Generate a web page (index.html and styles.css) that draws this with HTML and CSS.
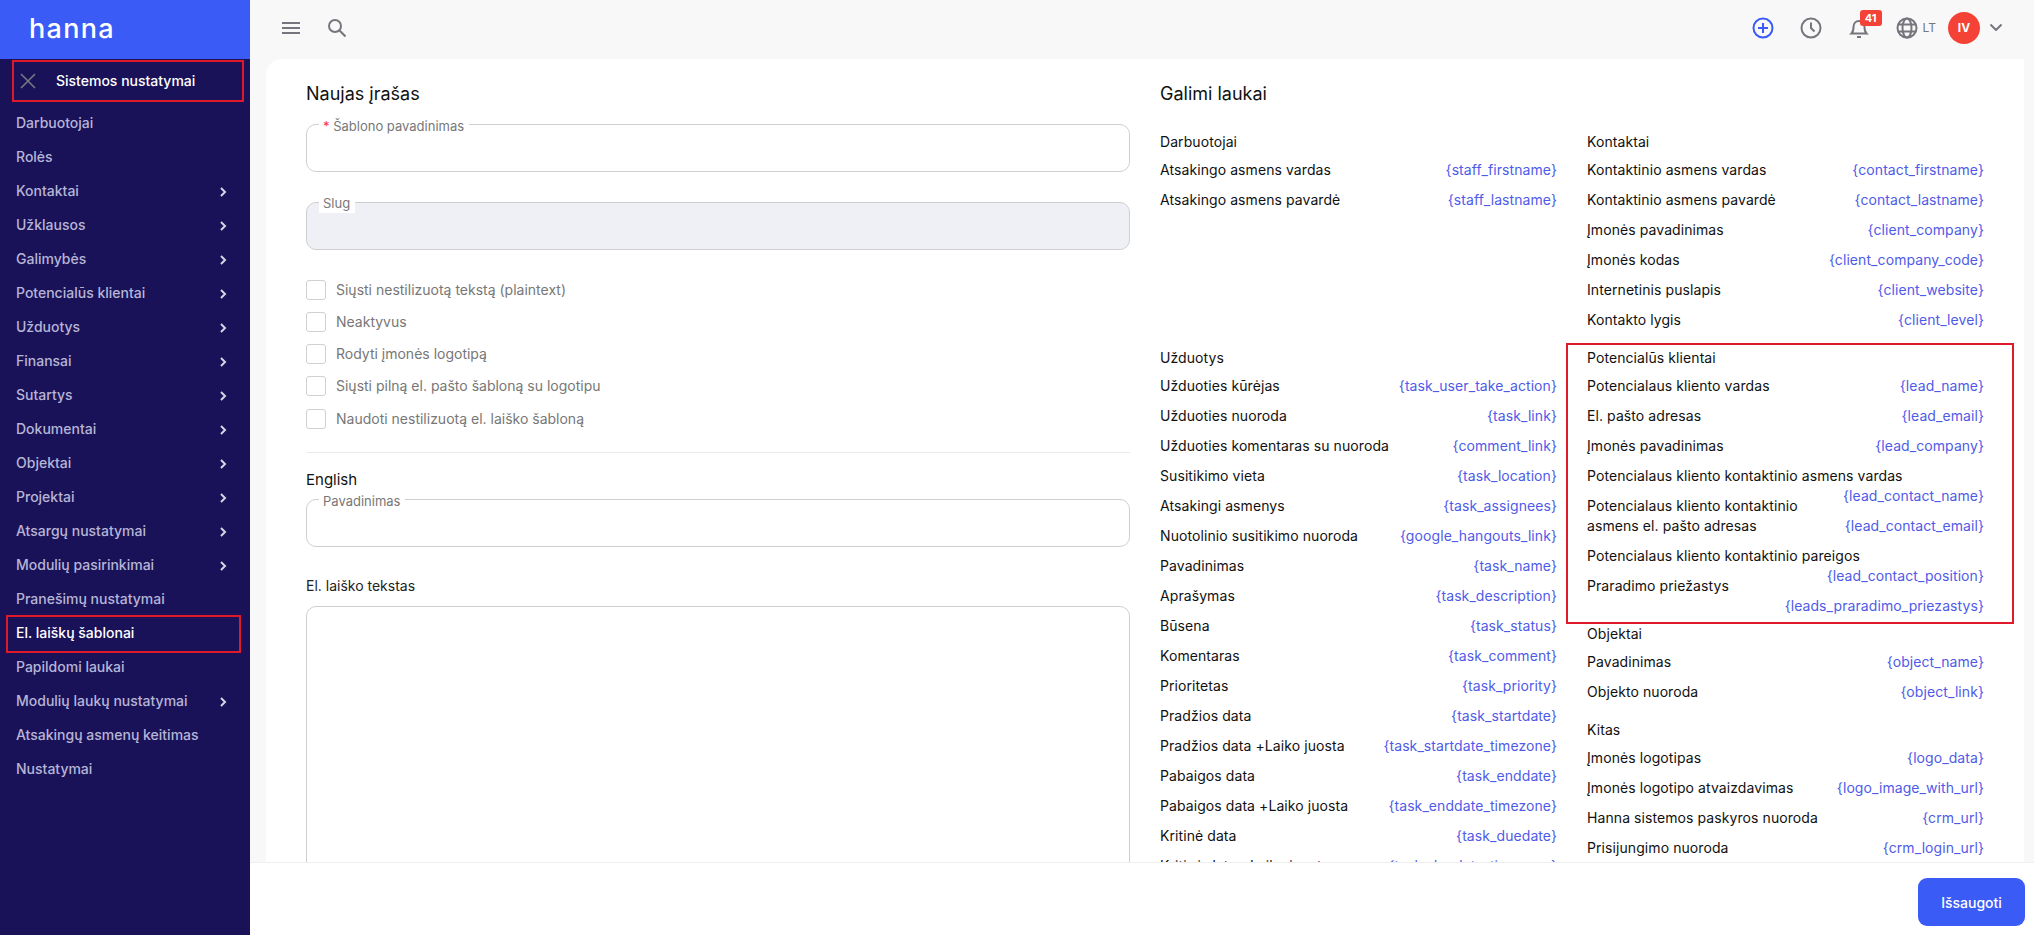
FILE: index.html
```html
<!DOCTYPE html>
<html lang="lt">
<head>
<meta charset="utf-8">
<title>Hanna</title>
<link rel="stylesheet" href="styles.css">
</head>
<body>
<div class="app">
  <aside class="sidebar">
    <div class="brand"><span class="logo">hanna</span></div>
    <div class="side-head marked">
      <svg class="side-x" width="16" height="16" viewBox="0 0 16 16"><path d="M1 1l14 14M15 1L1 15"/></svg>
      <span>Sistemos nustatymai</span>
    </div>
    <nav class="nav">
      <a class="nav-item">Darbuotojai</a>
      <a class="nav-item">Rolės</a>
      <a class="nav-item more">Kontaktai<svg viewBox="0 0 8 12"><path d="M2 2l4 4-4 4"/></svg></a>
      <a class="nav-item more">Užklausos<svg viewBox="0 0 8 12"><path d="M2 2l4 4-4 4"/></svg></a>
      <a class="nav-item more">Galimybės<svg viewBox="0 0 8 12"><path d="M2 2l4 4-4 4"/></svg></a>
      <a class="nav-item more">Potencialūs klientai<svg viewBox="0 0 8 12"><path d="M2 2l4 4-4 4"/></svg></a>
      <a class="nav-item more">Užduotys<svg viewBox="0 0 8 12"><path d="M2 2l4 4-4 4"/></svg></a>
      <a class="nav-item more">Finansai<svg viewBox="0 0 8 12"><path d="M2 2l4 4-4 4"/></svg></a>
      <a class="nav-item more">Sutartys<svg viewBox="0 0 8 12"><path d="M2 2l4 4-4 4"/></svg></a>
      <a class="nav-item more">Dokumentai<svg viewBox="0 0 8 12"><path d="M2 2l4 4-4 4"/></svg></a>
      <a class="nav-item more">Objektai<svg viewBox="0 0 8 12"><path d="M2 2l4 4-4 4"/></svg></a>
      <a class="nav-item more">Projektai<svg viewBox="0 0 8 12"><path d="M2 2l4 4-4 4"/></svg></a>
      <a class="nav-item more">Atsargų nustatymai<svg viewBox="0 0 8 12"><path d="M2 2l4 4-4 4"/></svg></a>
      <a class="nav-item more">Modulių pasirinkimai<svg viewBox="0 0 8 12"><path d="M2 2l4 4-4 4"/></svg></a>
      <a class="nav-item">Pranešimų nustatymai</a>
      <a class="nav-item active">El. laiškų šablonai</a>
      <a class="nav-item">Papildomi laukai</a>
      <a class="nav-item more">Modulių laukų nustatymai<svg viewBox="0 0 8 12"><path d="M2 2l4 4-4 4"/></svg></a>
      <a class="nav-item">Atsakingų asmenų keitimas</a>
      <a class="nav-item">Nustatymai</a>
    </nav>
  </aside>
  <main class="main">
    <header class="topbar">
      <svg class="tool" width="18" height="14" viewBox="0 0 18 14"><path d="M0 2h18M0 7h18M0 12h18"/></svg>
      <svg class="tool" width="18" height="18" viewBox="0 0 18 18"><circle cx="7" cy="7" r="6"/><path d="M11.5 11.5L17.5 17.5"/></svg>
      <div class="top-right">
        <svg class="tool plus" width="22" height="22" viewBox="0 0 22 22"><circle cx="11" cy="11" r="9.5"/><path d="M11 6v10M6 11h10"/></svg>
        <svg class="tool" width="22" height="22" viewBox="0 0 22 22"><circle cx="11" cy="11" r="9.5"/><path d="M11 5.5V11l3.5 3.5"/></svg>
        <div class="bell">
          <svg class="tool" width="22" height="24" viewBox="0 0 22 24"><path d="M3.5 17.5c1.5-1.500 2-3 2-6.500 0-3.500 2.300-6 5.500-6s5.500 2.500 5.500 6c0 3.500 .5 5 2 6.500zM9 21h4"/></svg>
          <span class="badge">41</span>
        </div>
        <div class="lang">
          <svg class="tool" width="22" height="22" viewBox="0 0 22 22"><circle cx="11" cy="11" r="9.500"/><ellipse cx="11" cy="11" rx="4.500" ry="9.500"/><path d="M2.500 7.500h17M2.500 14.500h17"/></svg>
          <span>LT</span>
        </div>
        <div class="user">
          <span class="avatar">IV</span>
          <svg class="tool" width="12" height="7" viewBox="0 0 12 7"><path d="M.5 .5L6 6l5.500-5.500"/></svg>
        </div>
      </div>
    </header>
    <div class="stage">
      <div class="card">
        <section class="form-col">
          <h2 class="title">Naujas įrašas</h2>
          <div class="field">
            <span class="legend"><i class="req">*</i> Šablono pavadinimas</span>
          </div>
          <div class="field disabled">
            <span class="legend">Slug</span>
          </div>
          <div class="checks">
            <label class="check"><span class="box"></span>Siųsti nestilizuotą tekstą (plaintext)</label>
            <label class="check"><span class="box"></span>Neaktyvus</label>
            <label class="check"><span class="box"></span>Rodyti įmonės logotipą</label>
            <label class="check"><span class="box"></span>Siųsti pilną el. pašto šabloną su logotipu</label>
            <label class="check"><span class="box"></span>Naudoti nestilizuotą el. laiško šabloną</label>
          </div>
          <hr class="rule">
          <div class="lang-name">English</div>
          <div class="field">
            <span class="legend">Pavadinimas</span>
          </div>
          <div class="body-label">El. laiško tekstas</div>
          <div class="textarea"></div>
        </section>
        <section class="fields-col">
          <h2 class="title">Galimi laukai</h2>
          <div class="groups">
            <div class="group">
              <h3>Darbuotojai</h3>
              <div class="row">Atsakingo asmens vardas<code>{staff_firstname}</code></div>
              <div class="row">Atsakingo asmens pavardė<code>{staff_lastname}</code></div>
            </div>
            <div class="group">
              <h3>Kontaktai</h3>
              <div class="row">Kontaktinio asmens vardas<code>{contact_firstname}</code></div>
              <div class="row">Kontaktinio asmens pavardė<code>{contact_lastname}</code></div>
              <div class="row">Įmonės pavadinimas<code>{client_company}</code></div>
              <div class="row">Įmonės kodas<code>{client_company_code}</code></div>
              <div class="row">Internetinis puslapis<code>{client_website}</code></div>
              <div class="row">Kontakto lygis<code>{client_level}</code></div>
            </div>
            <div class="group">
              <h3>Užduotys</h3>
              <div class="row">Užduoties kūrėjas<code>{task_user_take_action}</code></div>
              <div class="row">Užduoties nuoroda<code>{task_link}</code></div>
              <div class="row">Užduoties komentaras su nuoroda<code>{comment_link}</code></div>
              <div class="row">Susitikimo vieta<code>{task_location}</code></div>
              <div class="row">Atsakingi asmenys<code>{task_assignees}</code></div>
              <div class="row">Nuotolinio susitikimo nuoroda<code>{google_hangouts_link}</code></div>
              <div class="row">Pavadinimas<code>{task_name}</code></div>
              <div class="row">Aprašymas<code>{task_description}</code></div>
              <div class="row">Būsena<code>{task_status}</code></div>
              <div class="row">Komentaras<code>{task_comment}</code></div>
              <div class="row">Prioritetas<code>{task_priority}</code></div>
              <div class="row">Pradžios data<code>{task_startdate}</code></div>
              <div class="row">Pradžios data +Laiko juosta<code>{task_startdate_timezone}</code></div>
              <div class="row">Pabaigos data<code>{task_enddate}</code></div>
              <div class="row">Pabaigos data +Laiko juosta<code>{task_enddate_timezone}</code></div>
              <div class="row">Kritinė data<code>{task_duedate}</code></div>
              <div class="row">Kritinė data +Laiko juosta<code>{task_duedate_timezone}</code></div>
            </div>
            <div class="group-stack">
              <div class="group leads">
                <h3>Potencialūs klientai</h3>
                <div class="row">Potencialaus kliento vardas<code>{lead_name}</code></div>
                <div class="row">El. pašto adresas<code>{lead_email}</code></div>
                <div class="row">Įmonės pavadinimas<code>{lead_company}</code></div>
                <div class="row">Potencialaus kliento kontaktinio asmens vardas<code>{lead_contact_name}</code></div>
                <div class="row">Potencialaus kliento kontaktinio asmens el. pašto adresas<code>{lead_contact_email}</code></div>
                <div class="row">Potencialaus kliento kontaktinio pareigos<code>{lead_contact_position}</code></div>
                <div class="row">Praradimo priežastys<code>{leads_praradimo_priezastys}</code></div>
              </div>
              <div class="group">
                <h3>Objektai</h3>
                <div class="row">Pavadinimas<code>{object_name}</code></div>
                <div class="row">Objekto nuoroda<code>{object_link}</code></div>
              </div>
              <div class="group">
                <h3>Kitas</h3>
                <div class="row">Įmonės logotipas<code>{logo_data}</code></div>
                <div class="row">Įmonės logotipo atvaizdavimas<code>{logo_image_with_url}</code></div>
                <div class="row">Hanna sistemos paskyros nuoroda<code>{crm_url}</code></div>
                <div class="row">Prisijungimo nuoroda<code>{crm_login_url}</code></div>
              </div>
            </div>
          </div>
        </section>
      </div>
    </div>
    <footer class="footer"><button class="save">Išsaugoti</button></footer>
  </main>
</div>
</body>
</html>
```
FILE: styles.css
```css
* { box-sizing: border-box; }
html, body { height: 100%; margin: 0; }
body { font-family: Inter, "Noto Sans", sans-serif; font-size: 14px; line-height: 20px; color: #111; overflow: hidden; background: #f8f8f8; }
.app { display: flex; height: 100vh; }

.sidebar { width: 250px; flex: none; background: #1a1259; display: flex; flex-direction: column; }
.brand { height: 59px; flex: none; background: #3b5bf6; padding-left: 29px; display: flex; align-items: center; }
.logo { font-size: 27px; font-weight: 500; letter-spacing: 1.3px; color: #fff; line-height: 1; position: relative; top: -1px; }
.side-head { height: 42px; margin: 1px 6px 4px 12px; padding-left: 8px; display: flex; align-items: center; gap: 20px; color: #fff; font-weight: 500; position: relative; }
.side-x path { stroke: #77777f; stroke-width: 1.600; fill: none; }
.marked::after { content: ""; position: absolute; inset: 0; border: 2px solid #e0192a; pointer-events: none; }
.nav { display: flex; flex-direction: column; }
.nav-item { height: 34px; padding: 0 22px 0 16px; display: flex; align-items: center; justify-content: space-between; color: #b6b5d6; font-weight: 500; position: relative; }
.nav-item svg { width: 8px; height: 12px; position: relative; top: 1px; left: -1px; }
.nav-item svg path { stroke: #d5d5e6; stroke-width: 2; fill: none; }
.nav-item.active { color: #fff; font-weight: 500; }
.nav-item.active::after { content: ""; position: absolute; left: 6px; right: 9px; top: -1px; bottom: -3px; border: 2px solid #e0192a; }

.main { flex: 1; min-width: 0; display: flex; flex-direction: column; }
.topbar { height: 59px; flex: none; padding: 0 32px 4px 32px; display: flex; align-items: center; gap: 28px; }
.tool { fill: none; stroke: #75757d; stroke-width: 2; flex: none; }
.tool.plus { stroke: #3b5bf6; }
.top-right { margin-left: auto; display: flex; align-items: center; gap: 26px; }
.bell { position: relative; display: flex; }
.badge { position: absolute; left: 12px; top: -6px; width: 22px; height: 16px; border-radius: 3px; background: #f44336; color: #fff; font-size: 11px; font-weight: 700; line-height: 16px; text-align: center; }
.lang { display: flex; align-items: center; gap: 5px; color: #75757d; font-size: 12px; margin-right: -14px; }
.user { display: flex; align-items: center; gap: 10px; }
.avatar { width: 32px; height: 32px; border-radius: 50%; background: #f44336; color: #fff; font-size: 12px; font-weight: 700; display: flex; align-items: center; justify-content: center; }

.stage { flex: 1; min-height: 0; padding: 0 10px 0 16px; }
.card { height: 100%; background: #fff; border-radius: 16px 0 0 0; padding: 24px 40px 0; display: grid; grid-template-columns: 1fr 1fr; column-gap: 30px; overflow: hidden; align-items: start; }
.title { margin: 0; font-size: 18px; line-height: 22px; font-weight: 400; color: #111; }

.form-col .title { margin-bottom: 19px; }
.field { height: 48px; border: 1px solid #cfcfd2; border-radius: 10px; position: relative; margin-bottom: 30px; }
.field.disabled { background: #eef0f5; }
.legend { position: absolute; left: 12px; top: -10px; padding: 0 5px 0 4px; background: #fff; font-size: 13px; color: #777; line-height: 20px; }
.field:not(.disabled) .legend { top: -9px; height: 9px; overflow: visible; }
.req { color: #f5333f; font-style: normal; }
.checks { display: flex; flex-direction: column; gap: 12px; }
.check { display: flex; align-items: center; gap: 10px; height: 20px; font-size: 14px; color: #777; }
.check:last-child { margin-top: 1px; }
.box { width: 20px; height: 20px; border: 1px solid #d0d0d3; border-radius: 3px; background: #fff; }
.rule { border: 0; border-top: 1px solid #eaeaea; margin: 23px 0 17px; }
.lang-name { font-size: 15px; margin-bottom: 9px; color: #111; }
.form-col .lang-name + .field { margin-bottom: 29px; }
.body-label { margin-bottom: 10px; font-size: 14px; color: #222; }
.textarea { height: 400px; border: 1px solid #cfcfd2; border-radius: 10px; }

.fields-col .title { margin-bottom: 27px; }
.groups { display: grid; grid-template-columns: 1fr 1fr; column-gap: 30px; align-items: start; }
.group { margin-bottom: 8px; }
.group-stack .group { margin-bottom: 18px; }
.group h3 { margin: 0 0 8px; font-size: 14px; line-height: 20px; font-weight: 400; letter-spacing: .08px; color: #111; }
.row { margin-bottom: 10px; font-size: 14px; line-height: 20px; letter-spacing: .08px; color: #111; }
.row code { float: right; margin-bottom: 10px; font-family: inherit; color: #4f5be8; }
.group-stack .leads { position: relative; margin-bottom: 28px; }
.leads::after { content: ""; position: absolute; left: -21px; right: -30px; top: -5px; height: 277px; border: 2px solid #e0192a; pointer-events: none; }

.footer { height: 73px; flex: none; background: #fff; border-top: 1px solid #eeeeee; padding: 15px 9px 0 0; display: flex; justify-content: flex-end; align-items: flex-start; }
.save { width: 107px; height: 48px; border: 0; border-radius: 9px; background: #3b5bf6; color: #fff; font-family: inherit; font-size: 14px; font-weight: 500; }
```
